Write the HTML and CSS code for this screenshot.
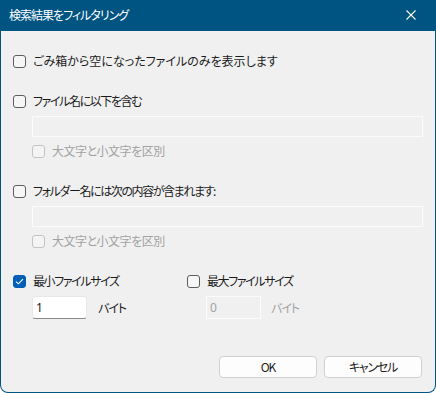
FILE: index.html
```html
<!DOCTYPE html>
<html lang="ja">
<head>
	<meta charset="UTF-8">
	<title>検索結果をフィルタリング</title>
	<link rel="stylesheet" href="styles.css">
</head>
<body>
	<div class="window">
		<div class="titlebar">
			<span class="title">検索結果をフィルタリング</span>
			<svg class="close" width="10" height="10" viewBox="0 0 10 10">
				<path d="M0.5 0.5 L9.5 9.5 M9.5 0.5 L0.5 9.5" stroke="#ffffff" stroke-width="1.1" fill="none"/>
			</svg>
		</div>
		<div class="content">
			<div class="check first">
				<span class="box"></span>
				<span class="label wide">ごみ箱から空になったファイルのみを表示します</span>
			</div>

			<div class="check group">
				<span class="box"></span>
				<span class="label">ファイル名に以下を含む</span>
			</div>
			<div class="field disabled"></div>
			<div class="check sub disabled">
				<span class="box"></span>
				<span class="label">大文字と小文字を区別</span>
			</div>

			<div class="check group">
				<span class="box"></span>
				<span class="label">フォルダー名には次の内容が含まれます:</span>
			</div>
			<div class="field disabled"></div>
			<div class="check sub disabled">
				<span class="box"></span>
				<span class="label">大文字と小文字を区別</span>
			</div>

			<div class="sizes">
				<div class="sizecol">
					<div class="check">
						<span class="box checked">
							<svg width="9" height="7" viewBox="0 0 9 7">
								<path d="M1 3.6 L3.4 5.8 L8 1.2" stroke="#ffffff" stroke-width="1.1" fill="none"/>
							</svg>
						</span>
						<span class="label">最小ファイルサイズ</span>
					</div>
					<div class="sizerow">
						<div class="num">1</div>
						<span class="unit">バイト</span>
					</div>
				</div>
				<div class="sizecol">
					<div class="check">
						<span class="box"></span>
						<span class="label">最大ファイルサイズ</span>
					</div>
					<div class="sizerow">
						<div class="num disabled">0</div>
						<span class="unit disabled">バイト</span>
					</div>
				</div>
			</div>

			<div class="buttons">
				<div class="btn">OK</div>
				<div class="btn">キャンセル</div>
			</div>
		</div>
	</div>
</body>
</html>
```

FILE: styles.css
```css
body {
	margin: 0;
	font-family: "Noto Sans CJK JP", "Noto Sans", sans-serif;
	font-size: 12px;
	font-feature-settings: "palt";
	color: #1b1b1b;
}

.window {
	width: 436px;
	height: 393px;
	box-sizing: border-box;
	border: 1px solid #005482;
	border-top: none;
	border-radius: 0 0 8px 8px;
	background-color: #f0f0f0;
	display: flex;
	flex-direction: column;
	overflow: hidden;
}

.titlebar {
	height: 31px;
	flex: none;
	background-color: #005482;
	color: #ffffff;
	display: flex;
	align-items: center;
	padding: 0 10px 0 9px;
	margin: 0 -1px;
}

.title {
	flex: 1;
	line-height: 16px;
	padding-bottom: 1px;
	letter-spacing: -1px;
}

.close {
	margin-right: 10px;
	margin-bottom: 1px;
}

.content {
	flex: 1;
	display: flex;
	flex-direction: column;
	padding: 0 13px 14px 12px;
}

.check {
	display: flex;
	align-items: center;
	height: 16px;
}

.check.first {
	margin-top: 22px;
}

.check.group {
	margin-top: 24px;
}

.check.sub {
	margin-left: 19px;
	margin-top: 6px;
}

.box {
	width: 11px;
	height: 11px;
	border: 1px solid #5d5d5d;
	border-radius: 3px;
	background-color: #f6f6f6;
	margin-right: 7px;
	display: flex;
	align-items: center;
	justify-content: center;
	flex: none;
}

.box.checked {
	background-color: #005fb8;
	border-color: #005fb8;
}

.label {
	line-height: 16px;
	white-space: nowrap;
	letter-spacing: -1.4px;
}

.label.wide {
	letter-spacing: 0;
}

.sub .label {
	letter-spacing: -0.5px;
}

.disabled .box {
	border-color: #c4c4c4;
	background-color: #f4f4f4;
}

.disabled .label, .unit.disabled {
	color: #a2a2a2;
}

.field {
	margin: 7px -1px 0 19px;
	height: 19px;
	border: 1px solid #fbfbfb;
	background-color: #f0f0f0;
}

.sizes {
	display: flex;
	margin-top: 24px;
}

.sizecol {
	width: 174px;
}

.sizerow {
	display: flex;
	align-items: center;
	margin: 7px 0 0 19px;
}

.num {
	width: 55px;
	height: 23px;
	box-sizing: border-box;
	padding: 0 3px;
	line-height: 21px;
	background-color: #ffffff;
	border: 1px solid #e8e8e8;
	border-bottom-color: #8a8a8a;
	border-radius: 3px;
	font-family: "Noto Sans", sans-serif;
	margin-right: 11px;
}

.num.disabled {
	background-color: #f0f0f0;
	border-color: #fbfbfb;
	color: #a2a2a2;
	border-radius: 0;
	margin-right: 10px;
}

.unit {
	letter-spacing: -1px;
}

.buttons {
	margin-top: auto;
	display: flex;
	justify-content: flex-end;
	gap: 7px;
}

.btn {
	width: 98px;
	height: 22px;
	box-sizing: border-box;
	border: 1px solid #d0d0d0;
	border-radius: 4px;
	background-color: #fdfdfd;
	text-align: center;
	line-height: 20px;
	letter-spacing: -1.2px;
}
```
